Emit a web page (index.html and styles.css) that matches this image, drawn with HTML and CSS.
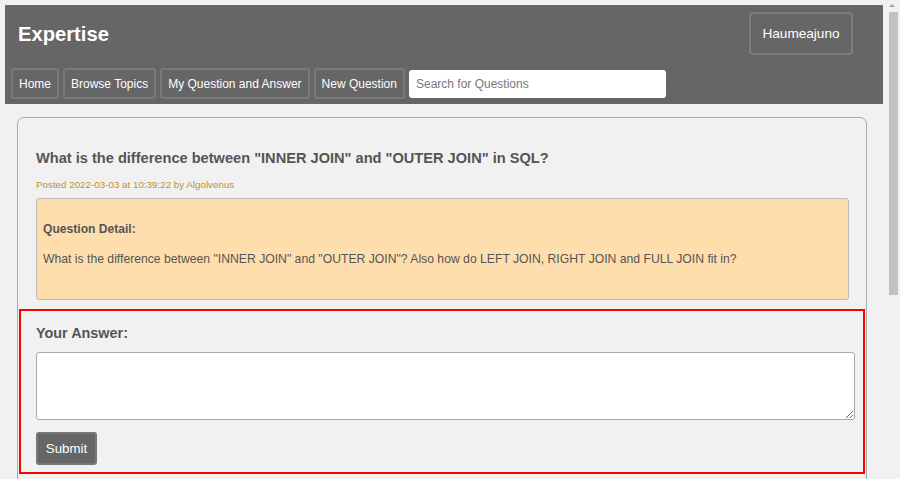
FILE: index.html
```html
<!DOCTYPE html>
<html lang="en">
<head>
<meta charset="utf-8">
<title>Expertise</title>
<link rel="stylesheet" href="styles.css">
</head>
<body>
<header class="site-header">
  <div class="header-top">
    <h1 class="brand">Expertise</h1>
    <button class="user-btn">Haumeajuno</button>
  </div>
  <nav class="nav">
    <a class="nav-btn" href="#">Home</a>
    <a class="nav-btn" href="#">Browse Topics</a>
    <a class="nav-btn" href="#">My Question and Answer</a>
    <a class="nav-btn" href="#">New Question</a>
    <input class="search" type="text" placeholder="Search for Questions">
  </nav>
</header>
<main class="card">
  <h2 class="q-title">What is the difference between "INNER JOIN" and "OUTER JOIN" in SQL?</h2>
  <p class="posted">Posted 2022-03-03 at 10:39:22 by Algolvenus</p>
  <section class="detail">
    <h3 class="detail-label">Question Detail:</h3>
    <p class="detail-text">What is the difference between "INNER JOIN" and "OUTER JOIN"? Also how do LEFT JOIN, RIGHT JOIN and FULL JOIN fit in?</p>
  </section>
  <form class="answer">
    <h3 class="answer-label">Your Answer:</h3>
    <textarea class="answer-box"></textarea>
    <button class="submit" type="button">Submit</button>
  </form>
  <div class="spacer"></div>
</main>
<div class="scrollbar">
  <span class="scroll-arrow"></span>
  <span class="scroll-thumb"></span>
</div>
</body>
</html>
```
FILE: styles.css
```css
html, body {
  background: #f1f1f1;
}
body {
  margin: 5px 0 0 5px;
  font-family: "Liberation Sans", Arial, sans-serif;
  color: #555;
}
.site-header {
  width: 878px;
  background: #666;
  height: 99px;
  box-sizing: border-box;
  padding: 7px 30px 0 6px;
  display: flex;
  flex-direction: column;
}
.header-top {
  display: flex;
  justify-content: space-between;
  align-items: flex-start;
  height: 56px;
}
.brand {
  margin: 9px 0 0 7px;
  font-size: 20.2px;
  font-weight: bold;
  color: #fff;
  line-height: 26px;
}
.user-btn {
  width: 104px;
  height: 43px;
  background: #666;
  border: 2px solid #7c7c7c;
  border-radius: 4px;
  color: #fff;
  font-family: "Liberation Sans", Arial, sans-serif;
  font-size: 13.6px;
  padding: 0;
}
.nav {
  display: flex;
  align-items: center;
  gap: 4px;
  height: 31px;
}
.nav-btn {
  height: 31px;
  box-sizing: border-box;
  display: flex;
  align-items: center;
  padding: 0 6px;
  background: #666;
  border: 2px solid #7a7a7a;
  border-radius: 3px;
  color: #fff;
  font-size: 12px;
  text-decoration: none;
}
.search {
  width: 257px;
  height: 28px;
  box-sizing: border-box;
  border: none;
  border-radius: 3px;
  padding: 0 7px;
  font-family: "Liberation Sans", Arial, sans-serif;
  font-size: 12px;
  background: #fff;
}
.search::placeholder {
  color: #777;
}
.card {
  margin: 13px 0 0 12px;
  width: 850px;
  box-sizing: border-box;
  border: 1px solid #aaa;
  border-radius: 7px;
  padding: 29px 17px 0 18px;
  background: #f1f1f1;
}
.q-title {
  margin: 0;
  font-size: 14.6px;
  font-weight: bold;
  line-height: 22px;
  color: #555;
}
.posted {
  margin: 9px 0 0;
  font-size: 9.8px;
  line-height: 13px;
  color: #c48e2c;
}
.detail {
  margin-top: 7px;
  height: 102px;
  box-sizing: border-box;
  background: #ffdead;
  border: 1px solid #bbb;
  border-radius: 3px;
  padding: 22px 6px 0;
}
.detail-label {
  margin: 0;
  font-size: 12.1px;
  font-weight: bold;
  line-height: 16px;
  color: #555;
}
.detail-text {
  margin: 14px 0 0;
  font-size: 12.2px;
  line-height: 16px;
  color: #555;
}
.answer {
  margin: 9px -16px 0 -17px;
  border: 2px solid #f00;
  height: 165px;
  box-sizing: border-box;
  padding: 12px 8px 0 15px;
  display: flex;
  flex-direction: column;
  align-items: flex-start;
}
.answer-label {
  margin: 0;
  font-size: 14.4px;
  font-weight: bold;
  line-height: 20px;
  color: #555;
}
.answer-box {
  margin-top: 9px;
  width: 100%;
  height: 68px;
  box-sizing: border-box;
  border: 1px solid #aaa;
  border-radius: 3px;
  background: #fff;
  resize: vertical;
}
.submit {
  margin-top: 12px;
  width: 61px;
  height: 33px;
  background: #666;
  border: 2px solid #777;
  border-radius: 3px;
  color: #fff;
  font-family: "Liberation Sans", Arial, sans-serif;
  font-size: 13.3px;
  padding: 0;
}
.spacer {
  height: 270px;
}
.scrollbar {
  position: fixed;
  top: 0;
  right: 0;
  width: 17px;
  height: 100%;
  background: #f1f1f1;
}
.scroll-arrow {
  position: absolute;
  top: 4px;
  left: 6px;
  width: 0;
  height: 0;
  border-left: 3px solid transparent;
  border-right: 3px solid transparent;
  border-bottom: 3px solid #a3a3a3;
}
.scroll-thumb {
  position: absolute;
  top: 12px;
  left: 6px;
  width: 9px;
  height: 283px;
  background: #c1c1c1;
}
```
